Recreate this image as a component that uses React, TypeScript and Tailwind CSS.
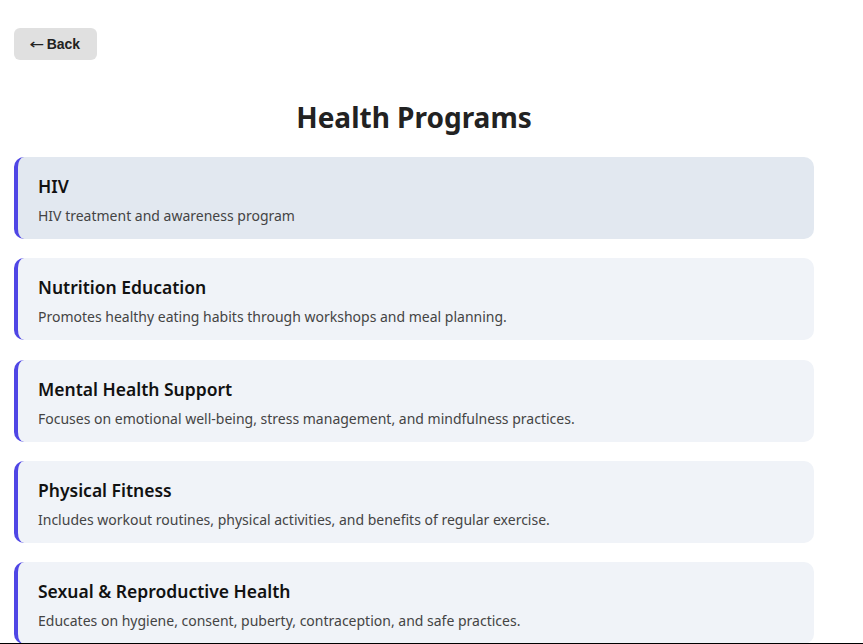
const programs = [
  { name: "HIV", description: "HIV treatment and awareness program", active: true },
  {
    name: "Nutrition Education",
    description: "Promotes healthy eating habits through workshops and meal planning.",
  },
  {
    name: "Mental Health Support",
    description: "Focuses on emotional well-being, stress management, and mindfulness practices.",
  },
  {
    name: "Physical Fitness",
    description: "Includes workout routines, physical activities, and benefits of regular exercise.",
  },
  {
    name: "Sexual & Reproductive Health",
    description: "Educates on hygiene, consent, puberty, contraception, and safe practices.",
  },
];

const ProgramCard = ({
  program,
}: {
  program: { name: string; description: string; active?: boolean };
}) => {
  return (
    <div
      className={`mb-[19.3px] rounded-[10px] border-l-4 border-[#4f46e5] pb-[13px] pl-5 pr-5 pt-[17px] ${
        program.active ? "bg-[#e2e8f0]" : "bg-[#f0f3f8]"
      }`}
    >
      <h3 className="text-[17.5px] font-semibold leading-6 text-[#111]">{program.name}</h3>
      <p className="mt-2 text-sm leading-5 text-[#444]">{program.description}</p>
    </div>
  );
};

export default function App() {
  return (
    <div className="min-h-screen bg-white font-['Noto_Sans','Open_Sans',sans-serif]">
      <div className="max-w-[828px] px-[14px] pt-7">
        <button className="flex h-8 w-[83px] items-center justify-center gap-1 rounded-md bg-[#e0e0e0] font-['Liberation_Sans',Arial,sans-serif] text-sm font-bold text-[#222]">
          <span className="inline-block scale-x-125 font-['DejaVu_Sans',sans-serif] font-normal">←</span>
          <span>Back</span>
        </button>
        <h1 className="mb-[24px] mt-[41px] text-center text-[28px] font-bold leading-8 text-[#222]">
          Health Programs
        </h1>
        <div>
          {programs.map((p) => (
            <ProgramCard key={p.name} program={p} />
          ))}
        </div>
      </div>
      <div className="fixed bottom-0 left-0 h-px w-full bg-black" />
    </div>
  );
}
